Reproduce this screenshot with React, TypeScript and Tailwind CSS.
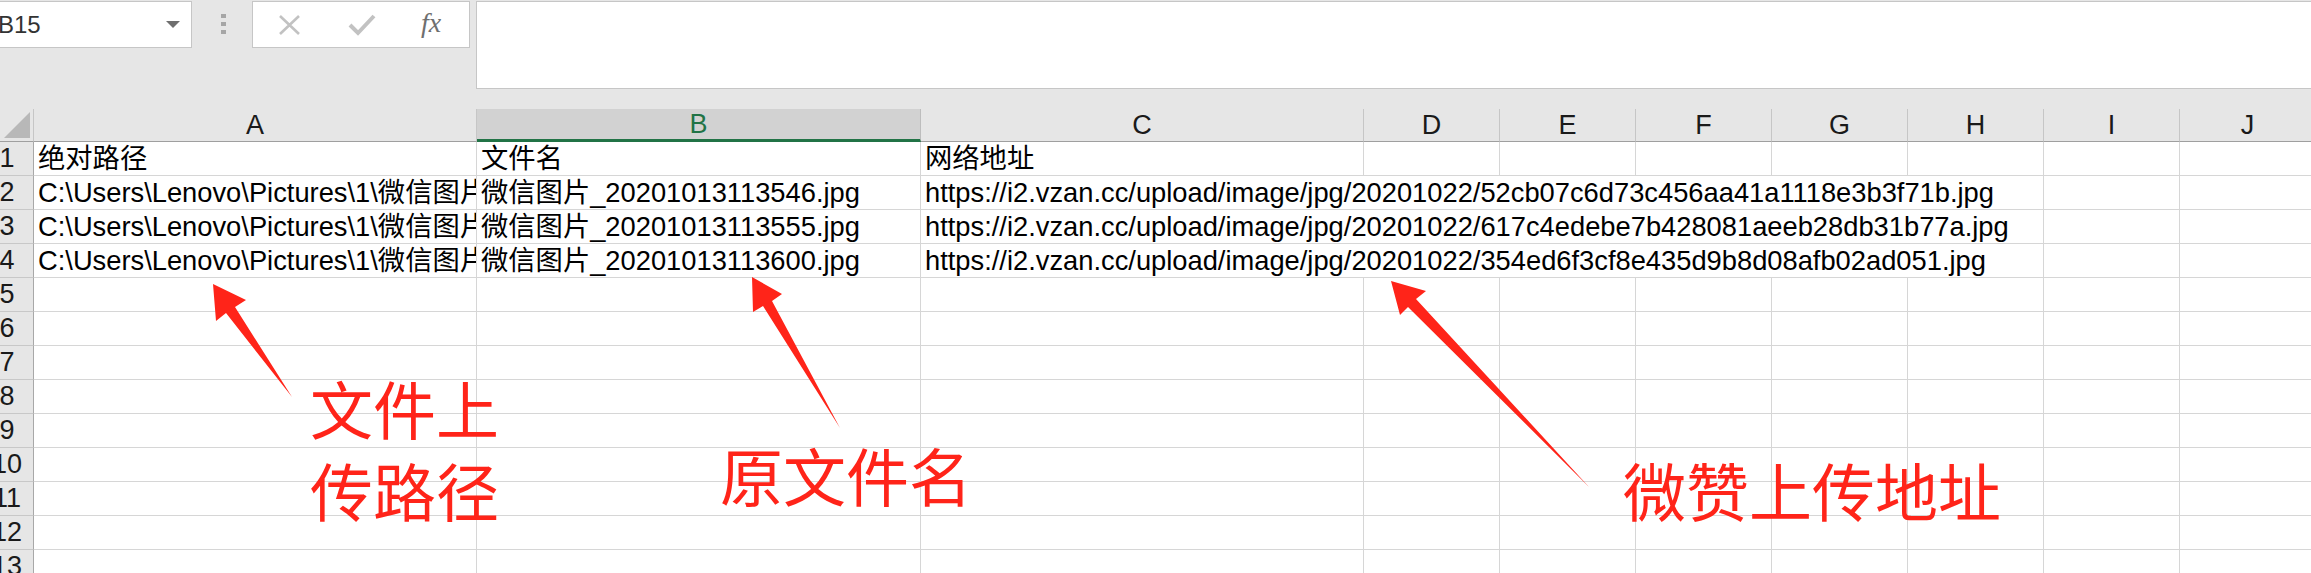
import React from 'react';

const FONT = { fontFamily: '"Liberation Sans", "Noto Sans CJK SC", sans-serif' };

interface Col {
  label: string;
  width: string;
}

const columns: Col[] = [
  { label: 'A', width: 'w-[443px]' },
  { label: 'B', width: 'w-[444px]' },
  { label: 'C', width: 'w-[443px]' },
  { label: 'D', width: 'w-[136px]' },
  { label: 'E', width: 'w-[136px]' },
  { label: 'F', width: 'w-[136px]' },
  { label: 'G', width: 'w-[136px]' },
  { label: 'H', width: 'w-[136px]' },
  { label: 'I', width: 'w-[136px]' },
  { label: 'J', width: 'w-[136px]' },
];

const dataRows = [
  {
    a: 'C:\\Users\\Lenovo\\Pictures\\1\\微信图片_20201013113546.jpg',
    b: '微信图片_20201013113546.jpg',
    c: 'https://i2.vzan.cc/upload/image/jpg/20201022/52cb07c6d73c456aa41a1118e3b3f71b.jpg',
  },
  {
    a: 'C:\\Users\\Lenovo\\Pictures\\1\\微信图片_20201013113555.jpg',
    b: '微信图片_20201013113555.jpg',
    c: 'https://i2.vzan.cc/upload/image/jpg/20201022/617c4edebe7b428081aeeb28db31b77a.jpg',
  },
  {
    a: 'C:\\Users\\Lenovo\\Pictures\\1\\微信图片_20201013113600.jpg',
    b: '微信图片_20201013113600.jpg',
    c: 'https://i2.vzan.cc/upload/image/jpg/20201022/354ed6f3cf8e435d9b8d08afb02ad051.jpg',
  },
];

const RowHeader = ({ n }: { n: number }) => (
  <div className="w-[34px] h-[34px] shrink-0 overflow-hidden bg-[#e6e6e6] border-r border-b border-r-[#a8a8a8] border-b-[#c8c8c8]">
    <div className="w-[52px] -ml-[19px] text-center leading-[33px] text-[27px] text-[#1a1a1a]">{n}</div>
  </div>
);

const Cell = ({ width, text }: { width: string; text?: string }) => (
  <div
    className={`${width} h-[34px] shrink-0 overflow-hidden whitespace-nowrap border-r border-b border-[#d6d6d6] pl-1 leading-[33px] text-[27.3px] text-black`}
  >
    {text}
  </div>
);

const Toolbar = () => (
  <div className="h-[109px] bg-[#e6e6e6] flex items-start pt-px">
    {/* name box */}
    <div className="w-[192px] h-[47px] shrink-0 bg-white border border-l-0 border-[#c6c6c6] flex items-center justify-between">
      <span className="text-[24px] text-[#333] -ml-[2px]">B15</span>
      <svg width="14" height="8" viewBox="0 0 14 8" className="mr-[11px]">
        <polygon points="0,0 14,0 7,7" fill="#6f6f6f" />
      </svg>
    </div>
    {/* splitter dots */}
    <div className="w-[60px] shrink-0 flex flex-col items-center gap-[4px] pt-[13px] pl-[3px]">
      <div className="w-[5px] h-[4px] bg-[#a6a6a6]" />
      <div className="w-[5px] h-[4px] bg-[#a6a6a6]" />
      <div className="w-[5px] h-[4px] bg-[#a6a6a6]" />
    </div>
    {/* cancel / enter / fx */}
    <div className="w-[218px] h-[47px] shrink-0 bg-white border border-[#c6c6c6] flex items-center">
      <svg width="24" height="22" viewBox="0 0 24 22" className="ml-[25px]">
        <path d="M2 2 L21 20 M21 2 L2 20" stroke="#c2c2c2" strokeWidth="2.6" fill="none" />
      </svg>
      <svg width="28" height="22" viewBox="0 0 28 22" className="ml-[46px]">
        <path d="M2 11 L10 19 L26 2" stroke="#c2c2c2" strokeWidth="4" fill="none" />
      </svg>
      <span
        className="ml-[45px] text-[28px] italic text-[#6f6f6f] leading-none pb-[3px]"
        style={{ fontFamily: '"Liberation Serif", serif' }}
      >
        fx
      </span>
    </div>
    {/* formula input */}
    <div className="ml-[6px] flex-1 h-[88px] bg-white border border-r-0 border-[#c6c6c6]" />
  </div>
);

const HeaderRow = () => (
  <div className="flex h-[33px]">
    <div className="w-[34px] h-[33px] shrink-0 bg-[#e6e6e6] border-r border-b border-r-[#c6c6c6] border-b-[#9f9f9f] flex items-end justify-end pr-[3px] pb-[3px]">
      <svg width="26" height="26" viewBox="0 0 26 26">
        <polygon points="26,0 26,26 0,26" fill="#b8b8b8" />
      </svg>
    </div>
    {columns.map((c) =>
      c.label === 'B' ? (
        <div
          key={c.label}
          className={`${c.width} h-[33px] shrink-0 bg-[#d2d2d2] border-r border-r-[#bdbdbd] border-b-[3px] border-b-[#217346] text-center leading-[31px] text-[27px] text-[#217346]`}
        >
          {c.label}
        </div>
      ) : (
        <div
          key={c.label}
          className={`${c.width} h-[33px] shrink-0 bg-[#e6e6e6] border-r border-b border-r-[#c6c6c6] border-b-[#9f9f9f] text-center leading-[33px] text-[27px] text-[#1a1a1a]`}
        >
          {c.label}
        </div>
      )
    )}
  </div>
);

const Annotations = () => (
  <>
    <svg className="absolute left-0 top-0 pointer-events-none" width="2311" height="573" viewBox="0 0 2311 573">
      <polygon
        points="213,284 246,300 235,307 292,397 226,313 216,321"
        fill="#ff2419"
      />
      <polygon
        points="752,277 782,294 772,301 840,428 763,306 753,312"
        fill="#ff2419"
      />
      <polygon
        points="1391,281 1426,291 1416,299 1589,487 1408,307 1400,315"
        fill="#ff2419"
      />
    </svg>
    <div className="absolute left-[310px] top-[371px] text-[63px] leading-[82px] text-[#ff2419]">
      <div>文件上</div>
      <div>传路径</div>
    </div>
    <div className="absolute left-[720px] top-[438px] text-[63px] leading-[82px] text-[#ff2419]">原文件名</div>
    <div className="absolute left-[1623px] top-[453px] text-[63px] leading-[82px] text-[#ff2419] whitespace-nowrap">
      微赞上传地址
    </div>
  </>
);

const App = () => {
  return (
    <div className="relative w-[2311px] h-[573px] overflow-hidden bg-white" style={FONT}>
      <Toolbar />
      <HeaderRow />

      {/* row 1 */}
      <div className="flex">
        <RowHeader n={1} />
        <Cell width="w-[443px]" text="绝对路径" />
        <Cell width="w-[444px]" text="文件名" />
        <Cell width="w-[443px]" text="网络地址" />
        {columns.slice(3).map((c) => (
          <Cell key={c.label} width={c.width} />
        ))}
      </div>

      {/* rows 2-4, the link spills over D..H */}
      {dataRows.map((r, i) => (
        <div key={i} className="flex">
          <RowHeader n={i + 2} />
          <Cell width="w-[443px]" text={r.a} />
          <Cell width="w-[444px]" text={r.b} />
          <Cell width="w-[1123px]" text={r.c} />
          <Cell width="w-[136px]" />
          <Cell width="w-[136px]" />
        </div>
      ))}

      {/* empty rows */}
      {[5, 6, 7, 8, 9, 10, 11, 12, 13].map((n) => (
        <div key={n} className="flex">
          <RowHeader n={n} />
          {columns.map((c) => (
            <Cell key={c.label} width={c.width} />
          ))}
        </div>
      ))}

      <Annotations />
    </div>
  );
};

export default App;
